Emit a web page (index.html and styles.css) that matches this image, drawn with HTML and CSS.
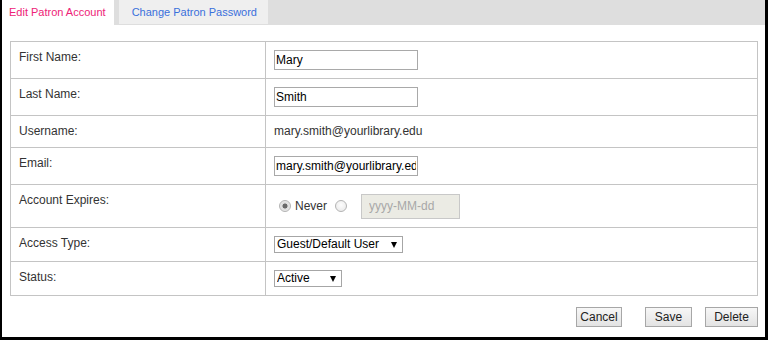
FILE: index.html
```html
<!DOCTYPE html>
<html lang="en">
<head>
<meta charset="utf-8">
<title>Edit Patron Account</title>
<link rel="stylesheet" href="styles.css">
</head>
<body>
<div class="frame">
  <div class="tabs">
    <div class="tab tab-active">Edit Patron Account</div>
    <div class="tab tab-inactive">Change Patron Password</div>
  </div>
  <div class="content">
    <table class="form">
      <colgroup><col class="col-label"><col class="col-value"></colgroup>
      <tr>
        <td class="label">First Name:</td>
        <td class="value"><input class="text" type="text" value="Mary"></td>
      </tr>
      <tr>
        <td class="label">Last Name:</td>
        <td class="value"><input class="text" type="text" value="Smith"></td>
      </tr>
      <tr>
        <td class="label">Username:</td>
        <td class="value">mary.smith@yourlibrary.edu</td>
      </tr>
      <tr>
        <td class="label">Email:</td>
        <td class="value"><input class="text" type="text" value="mary.smith@yourlibrary.edu"></td>
      </tr>
      <tr>
        <td class="label">Account Expires:</td>
        <td class="value">
          <div class="expires">
            <input class="radio" type="radio" name="exp" checked disabled>
            <span class="radio-text">Never</span>
            <input class="radio radio-second" type="radio" name="exp" disabled>
            <input class="date" type="text" placeholder="yyyy-MM-dd" disabled>
          </div>
        </td>
      </tr>
      <tr>
        <td class="label">Access Type:</td>
        <td class="value value-select">
          <span class="select-wrap select-access">
            <select class="select"><option>Guest/Default User</option></select>
          </span>
        </td>
      </tr>
      <tr>
        <td class="label">Status:</td>
        <td class="value value-select value-last">
          <span class="select-wrap select-status">
            <select class="select"><option>Active</option></select>
          </span>
        </td>
      </tr>
    </table>
    <div class="actions">
      <button class="btn btn-cancel" type="button">Cancel</button>
      <button class="btn btn-save" type="button">Save</button>
      <button class="btn btn-delete" type="button">Delete</button>
    </div>
  </div>
</div>
</body>
</html>
```

FILE: styles.css
```css
* { box-sizing: border-box; }

html, body {
  margin: 0;
  padding: 0;
  background: #fff;
}

body {
  font-family: "Liberation Sans", Arial, sans-serif;
  font-size: 12px;
  color: #333;
}

.frame {
  width: 768px;
  height: 340px;
  border-left: 2px solid #000;
  border-right: 3px solid #000;
  border-bottom: 3px solid #000;
  background: #fff;
  overflow: hidden;
}

.tabs {
  display: flex;
  height: 25px;
  background: #dedede;
}

.tab {
  font-size: 11px;
  line-height: 24px;
  white-space: nowrap;
}

.tab-active {
  background: #fff;
  height: 25px;
  padding: 0 8px 0 7px;
  margin-right: 5px;
  color: #ee2277;
}

.tab-inactive {
  background: #efefef;
  height: 24px;
  padding: 0 11px 0 13px;
  color: #3a70dc;
}

.content {
  padding: 16px 7px 0 8px;
}

.form {
  width: 748px;
  border-collapse: collapse;
  table-layout: fixed;
  border: 1px solid #c4c4c4;
}

.col-label { width: 255px; }

.form td {
  border: 1px solid #c4c4c4;
  padding: 8px;
  vertical-align: top;
  line-height: 15px;
  color: #333;
}

.value-select { padding-bottom: 9px; }
.value-last { padding-bottom: 10px; }

.text {
  display: block;
  width: 144px;
  height: 20px;
  margin: 0;
  padding: 0 1px;
  border: 1px solid #a9a9a9;
  font-family: "Liberation Sans", Arial, sans-serif;
  font-size: 12px;
  color: #000;
  background: #fff;
}

.expires {
  display: flex;
  align-items: center;
  height: 26px;
}

.radio {
  -webkit-appearance: none;
  appearance: none;
  width: 12px;
  height: 12px;
  margin: 0 4px 0 5px;
  border: 1px solid #b4b4b4;
  border-radius: 50%;
  background: radial-gradient(circle at 50% 40%, #fdfdfd 0%, #e6e6e6 100%);
}

.radio:first-child { margin-left: 5px; }

.radio:checked {
  background: radial-gradient(circle, #6a6a6a 0, #6a6a6a 2.2px, #dcdcdc 2.8px, #f4f4f4 100%);
}

.radio-text {
  color: #333;
  margin-right: 3px;
}

.radio-second { margin-right: 14px; }

.date {
  width: 99px;
  height: 25px;
  margin: 0;
  padding: 0 7px;
  border: 1px solid #c8c8c8;
  background: #ebebe4;
  font-family: "Liberation Sans", Arial, sans-serif;
  font-size: 12px;
}

.date::placeholder { color: #a8a8a8; }

.select-wrap {
  position: relative;
  display: block;
}

.select-access { width: 129px; }
.select-status { width: 68px; }

.select {
  -webkit-appearance: none;
  appearance: none;
  display: block;
  width: 100%;
  height: 17px;
  margin: 0;
  padding: 0 14px 0 2px;
  border: 1px solid #a6a6a6;
  border-radius: 0;
  background: #fff;
  font-family: "Liberation Sans", Arial, sans-serif;
  font-size: 12px;
  line-height: 15px;
  color: #000;
}

.select-wrap::after {
  content: "";
  position: absolute;
  right: 6px;
  top: 6px;
  border-left: 3px solid transparent;
  border-right: 3px solid transparent;
  border-top: 6px solid #000;
}

.actions {
  display: flex;
  justify-content: flex-end;
  margin-top: 11px;
}

.btn {
  height: 20px;
  padding: 0;
  margin: 0;
  border: 1px solid #a7a7a7;
  border-radius: 0;
  background: linear-gradient(#f7f7f7, #e3e3e3);
  font-family: "Liberation Sans", Arial, sans-serif;
  font-size: 12px;
  color: #222;
}

.btn-cancel { width: 46px; }
.btn-save { width: 47px; margin-left: 23px; }
.btn-delete { width: 53px; margin-left: 13px; }
```
